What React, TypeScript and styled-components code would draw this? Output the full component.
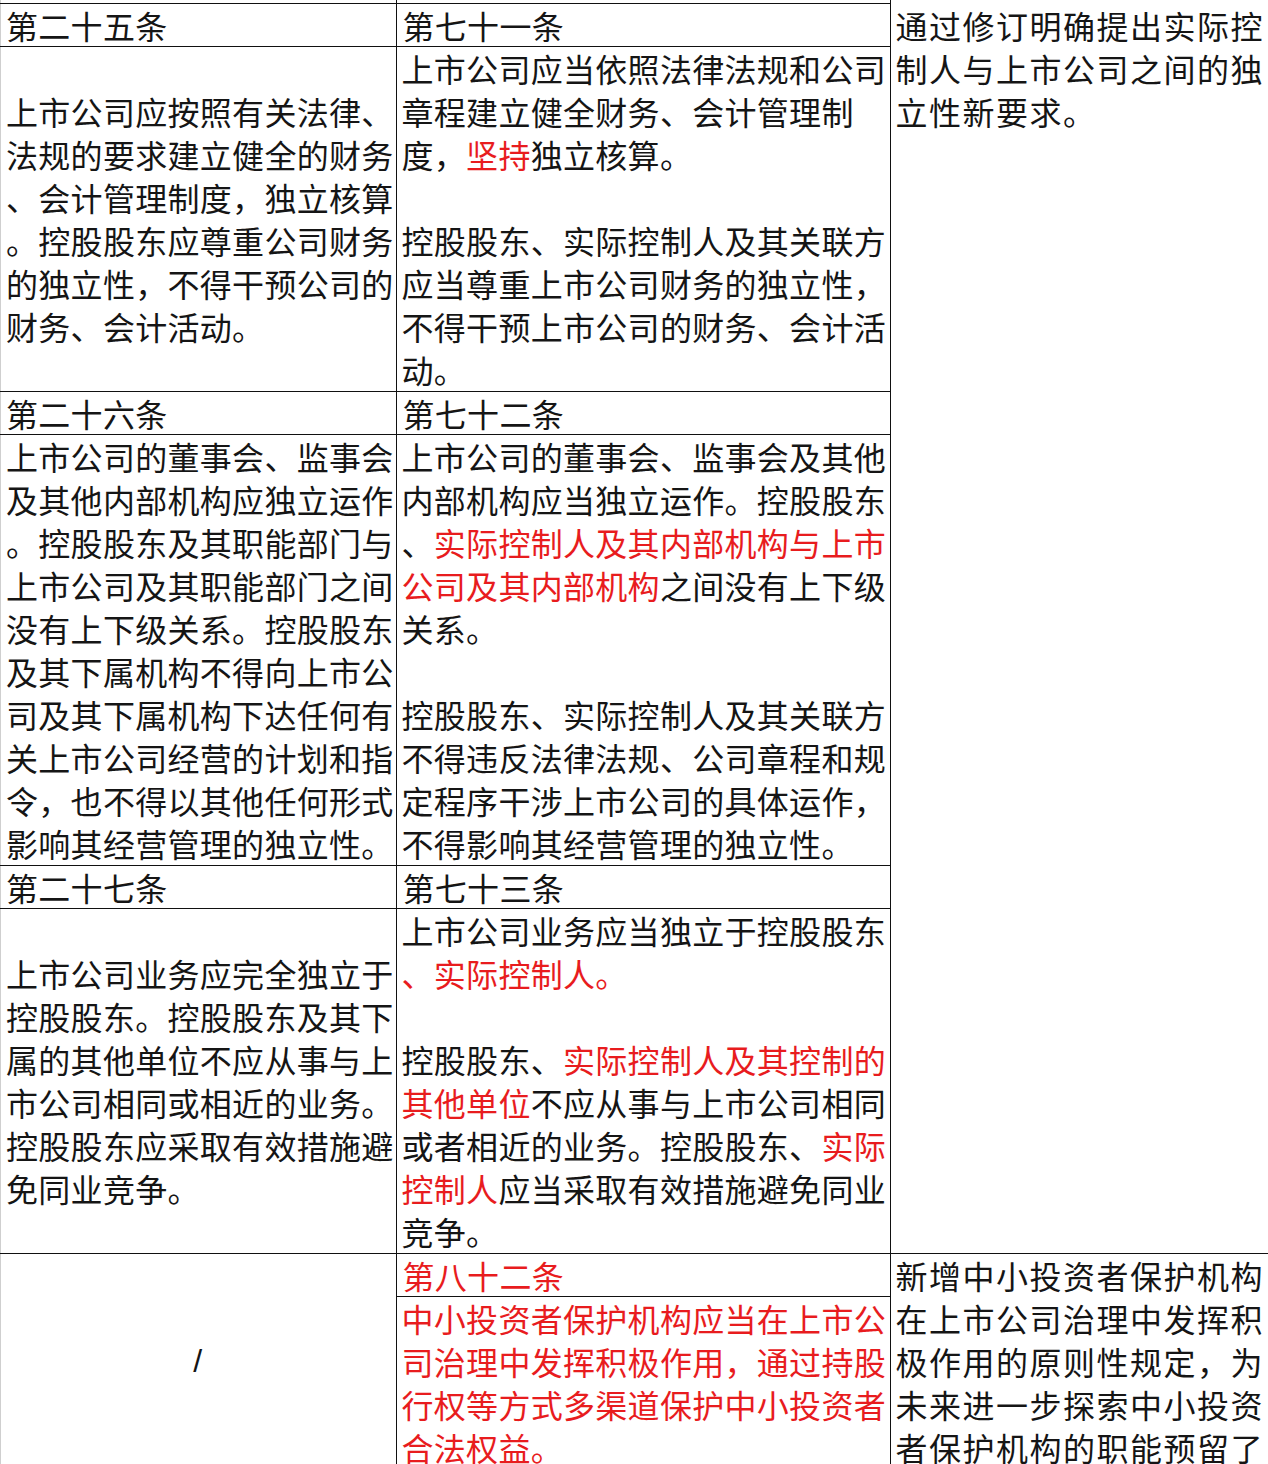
import React from "react";
import styled, { createGlobalStyle } from "styled-components";

const GlobalStyle = createGlobalStyle`
  html, body {
    margin: 0;
    padding: 0;
    background: #ffffff;
  }
  body {
    width: 1268px;
    height: 1464px;
    overflow: hidden;
    font-family: "Noto Sans CJK SC", "Noto Sans", sans-serif;
  }
`;

const RED = "#e81c1e";

// 每行文字用 [] 标出红色部分
const rows = [
  {
    oldNo: "第二十五条",
    newNo: "第七十一条",
    oldText: [
      "上市公司应按照有关法律、",
      "法规的要求建立健全的财务",
      "、会计管理制度，独立核算",
      "。控股股东应尊重公司财务",
      "的独立性，不得干预公司的",
      "财务、会计活动。",
    ],
    newText: [
      "上市公司应当依照法律法规和公司",
      "章程建立健全财务、会计管理制",
      "度，[坚持]独立核算。",
      "",
      "控股股东、实际控制人及其关联方",
      "应当尊重上市公司财务的独立性，",
      "不得干预上市公司的财务、会计活",
      "动。",
    ],
  },
  {
    oldNo: "第二十六条",
    newNo: "第七十二条",
    oldText: [
      "上市公司的董事会、监事会",
      "及其他内部机构应独立运作",
      "。控股股东及其职能部门与",
      "上市公司及其职能部门之间",
      "没有上下级关系。控股股东",
      "及其下属机构不得向上市公",
      "司及其下属机构下达任何有",
      "关上市公司经营的计划和指",
      "令，也不得以其他任何形式",
      "影响其经营管理的独立性。",
    ],
    newText: [
      "上市公司的董事会、监事会及其他",
      "内部机构应当独立运作。控股股东",
      "、[实际控制人及其内部机构与上市]",
      "[公司及其内部机构]之间没有上下级",
      "关系。",
      "",
      "控股股东、实际控制人及其关联方",
      "不得违反法律法规、公司章程和规",
      "定程序干涉上市公司的具体运作，",
      "不得影响其经营管理的独立性。",
    ],
  },
  {
    oldNo: "第二十七条",
    newNo: "第七十三条",
    oldText: [
      "上市公司业务应完全独立于",
      "控股股东。控股股东及其下",
      "属的其他单位不应从事与上",
      "市公司相同或相近的业务。",
      "控股股东应采取有效措施避",
      "免同业竞争。",
    ],
    newText: [
      "上市公司业务应当独立于控股股东",
      "[、实际控制人。]",
      "",
      "控股股东、[实际控制人及其控制的]",
      "[其他单位]不应从事与上市公司相同",
      "或者相近的业务。控股股东、[实际]",
      "[控制人]应当采取有效措施避免同业",
      "竞争。",
    ],
  },
];

const noteOne = ["通过修订明确提出实际控", "制人与上市公司之间的独", "立性新要求。"];

const noteTwo = [
  "新增中小投资者保护机构",
  "在上市公司治理中发挥积",
  "极作用的原则性规定，为",
  "未来进一步探索中小投资",
  "者保护机构的职能预留了",
];

const addedText = [
  "中小投资者保护机构应当在上市公",
  "司治理中发挥积极作用，通过持股",
  "行权等方式多渠道保护中小投资者",
  "合法权益。",
];

function renderLine(line: string, i: number) {
  const parts = line.split(/(\[[^\]]*\])/).filter((p) => p !== "");
  return (
    <Line key={i}>
      {parts.length === 0
        ? "\u00a0"
        : parts.map((p, j) =>
            p.startsWith("[") ? <Mark key={j}>{p.slice(1, -1)}</Mark> : <span key={j}>{p}</span>
          )}
    </Line>
  );
}

export default function App() {
  return (
    <>
      <GlobalStyle />
      <Sheet>
        <Table>
          <colgroup>
            <col style={{ width: 396 }} />
            <col style={{ width: 494 }} />
            <col style={{ width: 378 }} />
          </colgroup>
          <tbody>
            <tr>
              <Cut />
              <Cut />
              <Cut $open />
            </tr>
            {rows.map((row, i) => (
              <React.Fragment key={row.oldNo}>
                <tr>
                  <Head>{row.oldNo}</Head>
                  <Head>{row.newNo}</Head>
                  {i === 0 && (
                    <Note rowSpan={6} $open>
                      {noteOne.map(renderLine)}
                    </Note>
                  )}
                </tr>
                <tr>
                  <Body $middle>{row.oldText.map(renderLine)}</Body>
                  <Body>{row.newText.map(renderLine)}</Body>
                </tr>
              </React.Fragment>
            ))}
            <tr>
              <Empty rowSpan={2}>/</Empty>
              <Head $red>第八十二条</Head>
              <Note rowSpan={2}>{noteTwo.map(renderLine)}</Note>
            </tr>
            <tr>
              <Body $red>{addedText.map(renderLine)}</Body>
            </tr>
          </tbody>
        </Table>
      </Sheet>
    </>
  );
}

const Sheet = styled.div`
  width: 1268px;
  height: 1464px;
  overflow: hidden;
  box-shadow: inset 1px 0 0 #cfcfcf;
  color: #151515;
`;

const Table = styled.table`
  border-collapse: collapse;
  table-layout: fixed;
  width: 1268px;
  font-size: 32px;
  line-height: 43px;
  letter-spacing: 0.3px;
`;

const Cell = styled.td<{ $red?: boolean; $open?: boolean }>`
  border: 1px solid #111;
  padding: 0 0 0 6px;
  vertical-align: top;
  white-space: nowrap;
  overflow: hidden;
  color: ${(p) => (p.$red ? RED : "inherit")};
  ${(p) => (p.$open ? "border-top: 1px solid transparent;" : "")}
  &:first-child {
    border-left: none;
  }
`;

const Cut = styled(Cell)`
  height: 3px;
  line-height: 0;
  padding: 0;
  border-top: none;
  ${(p) => (p.$open ? "border-bottom: none;" : "")}
`;

const Head = styled(Cell)`
  line-height: 42px;
  height: 42px;
`;

const Body = styled(Cell)<{ $middle?: boolean }>`
  padding-left: ${(p) => (p.$middle ? "6px" : "5px")};
  vertical-align: ${(p) => (p.$middle ? "middle" : "top")};
`;

const Note = styled(Cell)`
  letter-spacing: 1.5px;
  padding-left: 5px;
  border-right: none;
`;

const Empty = styled(Cell)`
  vertical-align: middle;
  text-align: center;
  padding: 0;
  font-family: "Liberation Sans", sans-serif;
`;

const Line = styled.div`
  display: block;
  height: 43px;
`;

const Mark = styled.span`
  color: ${RED};
`;
